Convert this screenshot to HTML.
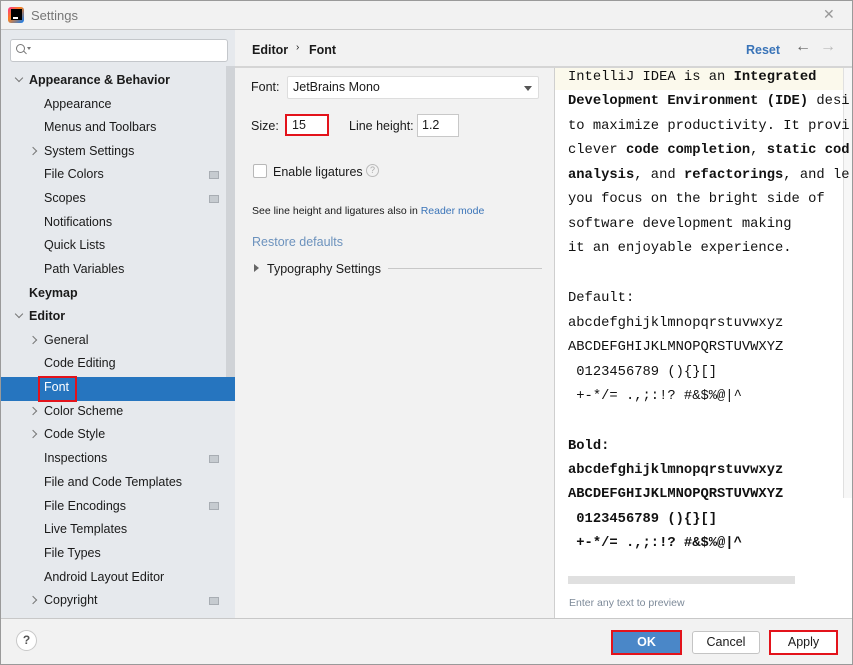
<!DOCTYPE html>
<html><head><meta charset="utf-8"><style>
*{margin:0;padding:0;box-sizing:border-box}
body{width:853px;height:665px;position:relative;overflow:hidden;background:#f2f2f2;font-family:"Liberation Sans","Noto Sans CJK SC",sans-serif;font-size:12.5px;color:#1a1a1a}
.a{position:absolute;white-space:nowrap}
.frame{position:absolute;left:0;top:0;width:853px;height:665px;border:1px solid #9a9a9a;pointer-events:none}
.side{position:absolute;left:1px;top:30px;width:234px;height:588px;background:#e6e9ed}
.it{position:absolute;white-space:nowrap;font-size:12.5px}
.b{font-weight:bold}
.chev{position:absolute;width:6px;height:6px;border-right:1.3px solid #777;border-bottom:1.3px solid #777}
.r{transform:rotate(-45deg)}
.d{transform:rotate(45deg)}
.ico{position:absolute;left:209px;width:10px;height:8px;border:1.5px solid #a8adb3;background:#c6cbd0}
.mono{position:absolute;left:568px;font-family:"Liberation Mono",monospace;font-size:13.8px;white-space:pre;color:#111}
.link{color:#3a74b8}
</style></head><body>
<div class="a" style="left:0;top:0;width:853px;height:30px;background:#f2f2f2;border-bottom:1px solid #c8c8c8"></div>
<div class="a" style="left:8px;top:7px;width:16px;height:16px;background:linear-gradient(135deg,#ff318c,#fc801d 40%,#087cfa);border-radius:3px"></div>
<div class="a" style="left:11px;top:9px;width:11px;height:11px;background:#000"></div>
<div class="a" style="left:13px;top:17px;width:5px;height:1.5px;background:#fff"></div>
<div class="a" style="left:31px;top:8px;color:#777;font-size:13px">Settings</div>
<div class="a" style="left:823px;top:6px;color:#999;font-size:14px;font-weight:300">✕</div>

<div class="side"></div>
<div class="a" style="left:10px;top:39px;width:218px;height:23px;background:#fff;border:1px solid #c4c7cb;border-radius:3px"></div>
<div class="a" style="left:16px;top:44px;width:9px;height:9px;border:1.3px solid #777;border-radius:50%"></div>
<div class="a" style="left:23px;top:52px;width:4px;height:1.3px;background:#777;transform:rotate(45deg)"></div>
<div class="a" style="left:27px;top:47px;border-left:2.5px solid transparent;border-right:2.5px solid transparent;border-top:3px solid #777"></div>
<div class="a" style="left:226px;top:66px;width:9px;height:330px;background:#d0d3d7"></div>
<div class="a" style="left:1px;top:377px;width:234px;height:24px;background:#2675bf"></div>

<div class="chev d" style="left:16px;top:75px"></div>
<div class="it b" style="left:29px;top:73px">Appearance &amp; Behavior</div>
<div class="it" style="left:44px;top:97px">Appearance</div>
<div class="it" style="left:44px;top:120px">Menus and Toolbars</div>
<div class="chev r" style="left:30px;top:148px"></div>
<div class="it" style="left:44px;top:144px">System Settings</div>
<div class="it" style="left:44px;top:167px">File Colors</div><div class="ico" style="top:171px"></div>
<div class="it" style="left:44px;top:191px">Scopes</div><div class="ico" style="top:195px"></div>
<div class="it" style="left:44px;top:215px">Notifications</div>
<div class="it" style="left:44px;top:238px">Quick Lists</div>
<div class="it" style="left:44px;top:262px">Path Variables</div>
<div class="it b" style="left:29px;top:286px">Keymap</div>
<div class="chev d" style="left:16px;top:311px"></div>
<div class="it b" style="left:29px;top:309px">Editor</div>
<div class="chev r" style="left:30px;top:337px"></div>
<div class="it" style="left:44px;top:333px">General</div>
<div class="it" style="left:44px;top:356px">Code Editing</div>
<div class="it" style="left:44px;top:380px;color:#fff">Font</div>
<div class="a" style="left:38px;top:376px;width:39px;height:26px;border:2px solid #e3131b"></div>
<div class="chev r" style="left:30px;top:408px"></div>
<div class="it" style="left:44px;top:404px">Color Scheme</div>
<div class="chev r" style="left:30px;top:431px"></div>
<div class="it" style="left:44px;top:427px">Code Style</div>
<div class="it" style="left:44px;top:451px">Inspections</div><div class="ico" style="top:455px"></div>
<div class="it" style="left:44px;top:475px">File and Code Templates</div>
<div class="it" style="left:44px;top:499px">File Encodings</div><div class="ico" style="top:502px"></div>
<div class="it" style="left:44px;top:522px">Live Templates</div>
<div class="it" style="left:44px;top:546px">File Types</div>
<div class="it" style="left:44px;top:570px">Android Layout Editor</div>
<div class="chev r" style="left:30px;top:597px"></div>
<div class="it" style="left:44px;top:593px">Copyright</div><div class="ico" style="top:597px"></div>

<div class="a" style="left:235px;top:66px;width:618px;height:2px;background:#d5d5d5"></div>
<div class="a b" style="left:252px;top:43px">Editor</div>
<div class="a" style="left:296px;top:42px;font-size:10px">›</div>
<div class="a b" style="left:309px;top:43px">Font</div>
<div class="a b link" style="left:746px;top:43px">Reset</div>
<div class="a" style="left:795px;top:38px;color:#666;font-size:16px">←</div>
<div class="a" style="left:820px;top:38px;color:#bbb;font-size:16px">→</div>

<div class="a" style="left:251px;top:80px">Font:</div>
<div class="a" style="left:287px;top:76px;width:252px;height:23px;background:#fff;border:1px solid #ddd;border-radius:2px"></div>
<div class="a" style="left:293px;top:80px">JetBrains Mono</div>
<div class="a" style="left:524px;top:86px;border-left:4px solid transparent;border-right:4px solid transparent;border-top:5px solid #555"></div>
<div class="a" style="left:251px;top:119px">Size:</div>
<div class="a" style="left:285px;top:114px;width:44px;height:22px;background:#fff;border:2px solid #e3131b"></div>
<div class="a" style="left:292px;top:118px">15</div>
<div class="a" style="left:349px;top:119px">Line height:</div>
<div class="a" style="left:417px;top:114px;width:42px;height:23px;background:#fff;border:1px solid #c8c8c8"></div>
<div class="a" style="left:422px;top:118px">1.2</div>
<div class="a" style="left:253px;top:164px;width:14px;height:14px;background:#fff;border:1px solid #b8b8b8;border-radius:2px"></div>
<div class="a" style="left:273px;top:165px">Enable ligatures</div>
<div class="a" style="left:366px;top:164px;width:13px;height:13px;border:1px solid #bbb;border-radius:50%;color:#aaa;font-size:9px;text-align:center;line-height:11px">?</div>
<div class="a" style="left:252px;top:205px;font-size:10.5px">See line height and ligatures also in <span class="link">Reader mode</span></div>
<div class="a link" style="left:252px;top:235px;color:#6c92bd">Restore defaults</div>
<div class="a" style="left:254px;top:264px;border-top:4px solid transparent;border-bottom:4px solid transparent;border-left:5px solid #666"></div>
<div class="a" style="left:267px;top:262px">Typography Settings</div>
<div class="a" style="left:388px;top:268px;width:154px;height:1px;background:#c8c8c8"></div>

<div class="a" style="left:554px;top:68px;width:1px;height:550px;background:#cfcfcf"></div>
<div class="a" style="left:555px;top:68px;width:298px;height:550px;background:#fff"></div>
<div class="a" style="left:555px;top:68px;width:288px;height:22px;background:#fbf9ec"></div>
<div class="a" style="left:843px;top:68px;width:10px;height:430px;background:#f7f7f7;border-left:1px solid #e0e0e0"></div>
<div class="mono" style="top:70px">IntelliJ IDEA is an <b>Integrated</b></div>
<div class="mono" style="top:94px"><b>Development Environment (IDE)</b> desi</div>
<div class="mono" style="top:119px">to maximize productivity. It provi</div>
<div class="mono" style="top:143px">clever <b>code completion</b>, <b>static cod</b></div>
<div class="mono" style="top:168px"><b>analysis</b>, and <b>refactorings</b>, and le</div>
<div class="mono" style="top:192px">you focus on the bright side of</div>
<div class="mono" style="top:217px">software development making</div>
<div class="mono" style="top:241px">it an enjoyable experience.</div>
<div class="mono" style="top:291px">Default:</div>
<div class="mono" style="top:316px">abcdefghijklmnopqrstuvwxyz</div>
<div class="mono" style="top:340px">ABCDEFGHIJKLMNOPQRSTUVWXYZ</div>
<div class="mono" style="top:365px"> 0123456789 (){}[]</div>
<div class="mono" style="top:389px"> +-*/= .,;:!? #&amp;$%@|^</div>
<div class="mono" style="top:439px"><b>Bold:</b></div>
<div class="mono" style="top:463px"><b>abcdefghijklmnopqrstuvwxyz</b></div>
<div class="mono" style="top:487px"><b>ABCDEFGHIJKLMNOPQRSTUVWXYZ</b></div>
<div class="mono" style="top:512px"><b> 0123456789 (){}[]</b></div>
<div class="mono" style="top:536px"><b> +-*/= .,;:!? #&amp;$%@|^</b></div>
<div class="a" style="left:568px;top:576px;width:227px;height:8px;background:#e0e0e0"></div>
<div class="a" style="left:569px;top:597px;font-size:10.5px;color:#7d8a99">Enter any text to preview</div>

<div class="a" style="left:0;top:618px;width:853px;height:1px;background:#c8c8c8"></div>
<div class="a" style="left:16px;top:630px;width:21px;height:21px;border:1px solid #c8c8c8;border-radius:50%;background:#fff;text-align:center;line-height:19px;font-weight:bold;color:#555;font-size:12px">?</div>
<div class="a" style="left:611px;top:630px;width:71px;height:25px;background:#4a87c8;border:2px solid #e3131b;color:#fff;font-weight:bold;text-align:center;line-height:21px">OK</div>
<div class="a" style="left:692px;top:631px;width:68px;height:23px;background:#fff;border:1px solid #c4c4c4;border-radius:3px;text-align:center;line-height:21px">Cancel</div>
<div class="a" style="left:769px;top:630px;width:69px;height:25px;background:#fff;border:2px solid #e3131b;text-align:center;line-height:21px">Apply</div>
<div class="frame"></div>
</body></html>
